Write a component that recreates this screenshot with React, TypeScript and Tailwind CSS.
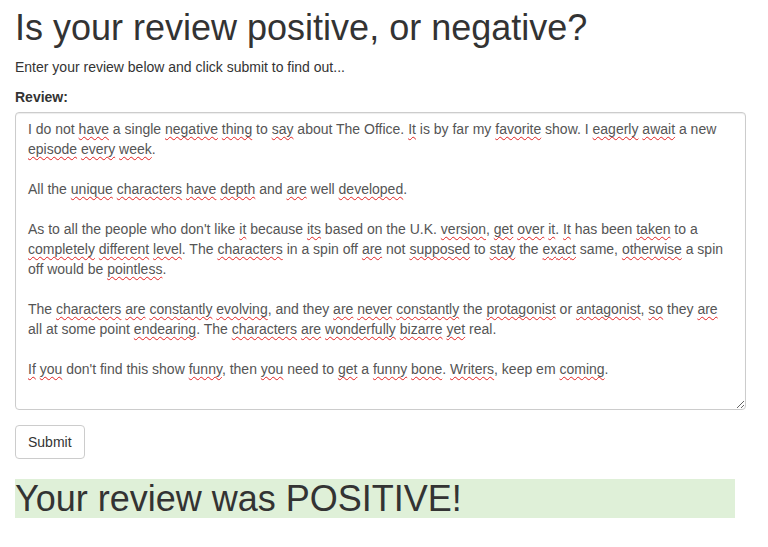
import React from "react";

const W = ({ children }: { children: React.ReactNode }) => (
  <span className="underline decoration-wavy decoration-[#e02020] decoration-1 underline-offset-[2px] [text-decoration-skip-ink:none]">
    {children}
  </span>
);

export default function App() {
  return (
    <div
      className="min-h-[547px] bg-white px-[15px] text-[14px] leading-[20px] text-[#333]"
      style={{ fontFamily: '"Liberation Sans", Arial, sans-serif' }}
    >
      <h1 className="pt-[8px] mb-[9px] text-[36px] leading-[39.6px] font-normal text-[#333]">
        Is your review positive, or negative?
      </h1>
      <p className="mb-[10px]">Enter your review below and click submit to find out...</p>
      <label className="block mb-[5px] font-bold">Review:</label>
      <div className="w-[731px] h-[298px] border border-[#ccc] rounded-[4px] px-[12px] pt-[6px] text-[#555] resize overflow-hidden shadow-[inset_0_1px_1px_rgba(0,0,0,0.075)]">
        <p>
          I do not <W>have</W> a single <W>negative</W> <W>thing</W> to <W>say</W> about The Office. <W>It</W> is by far my{" "}
          <W>favorite</W> show. I <W>eagerly</W> <W>await</W> a new <W>episode</W> <W>every</W> <W>week</W>.
        </p>
        <p className="mt-[20px]">
          All the <W>unique</W> <W>characters</W> <W>have</W> <W>depth</W> and <W>are</W> well <W>developed</W>.
        </p>
        <p className="mt-[20px]">
          As to all the people who don't like <W>it</W> because <W>its</W> based on the U.K. <W>version</W>, <W>get</W>{" "}
          <W>over</W> <W>it</W>. <W>It</W> has been <W>taken</W> to a <W>completely</W> <W>different</W> <W>level</W>. The{" "}
          <W>characters</W> in a spin off <W>are</W> not <W>supposed</W> to <W>stay</W> the <W>exact</W> same,{" "}
          <W>otherwise</W> a spin off would be <W>pointless</W>.
        </p>
        <p className="mt-[20px]">
          The <W>characters</W> <W>are</W> <W>constantly</W> <W>evolving</W>, and they <W>are</W> <W>never</W>{" "}
          <W>constantly</W> the <W>protagonist</W> or <W>antagonist</W>, <W>so</W> they <W>are</W> all at some point{" "}
          <W>endearing</W>. The <W>characters</W> <W>are</W> <W>wonderfully</W> <W>bizarre</W> <W>yet</W> real.
        </p>
        <p className="mt-[20px]">
          <W>If</W> <W>you</W> don't find this show <W>funny</W>, then <W>you</W> need to <W>get</W> a <W>funny</W>{" "}
          <W>bone</W>. <W>Writers</W>, keep em <W>coming</W>.
        </p>
      </div>
      <button className="mt-[15px] block bg-white border border-[#ccc] rounded-[4px] px-[12px] py-[6px] text-[14px] leading-[20px] text-[#333]">
        Submit
      </button>
      <h1 className="mt-[20px] w-[720px] bg-[#dff0d8] text-[36px] leading-[39.6px] font-normal text-[#333]">
        Your review was POSITIVE!
      </h1>
    </div>
  );
}
